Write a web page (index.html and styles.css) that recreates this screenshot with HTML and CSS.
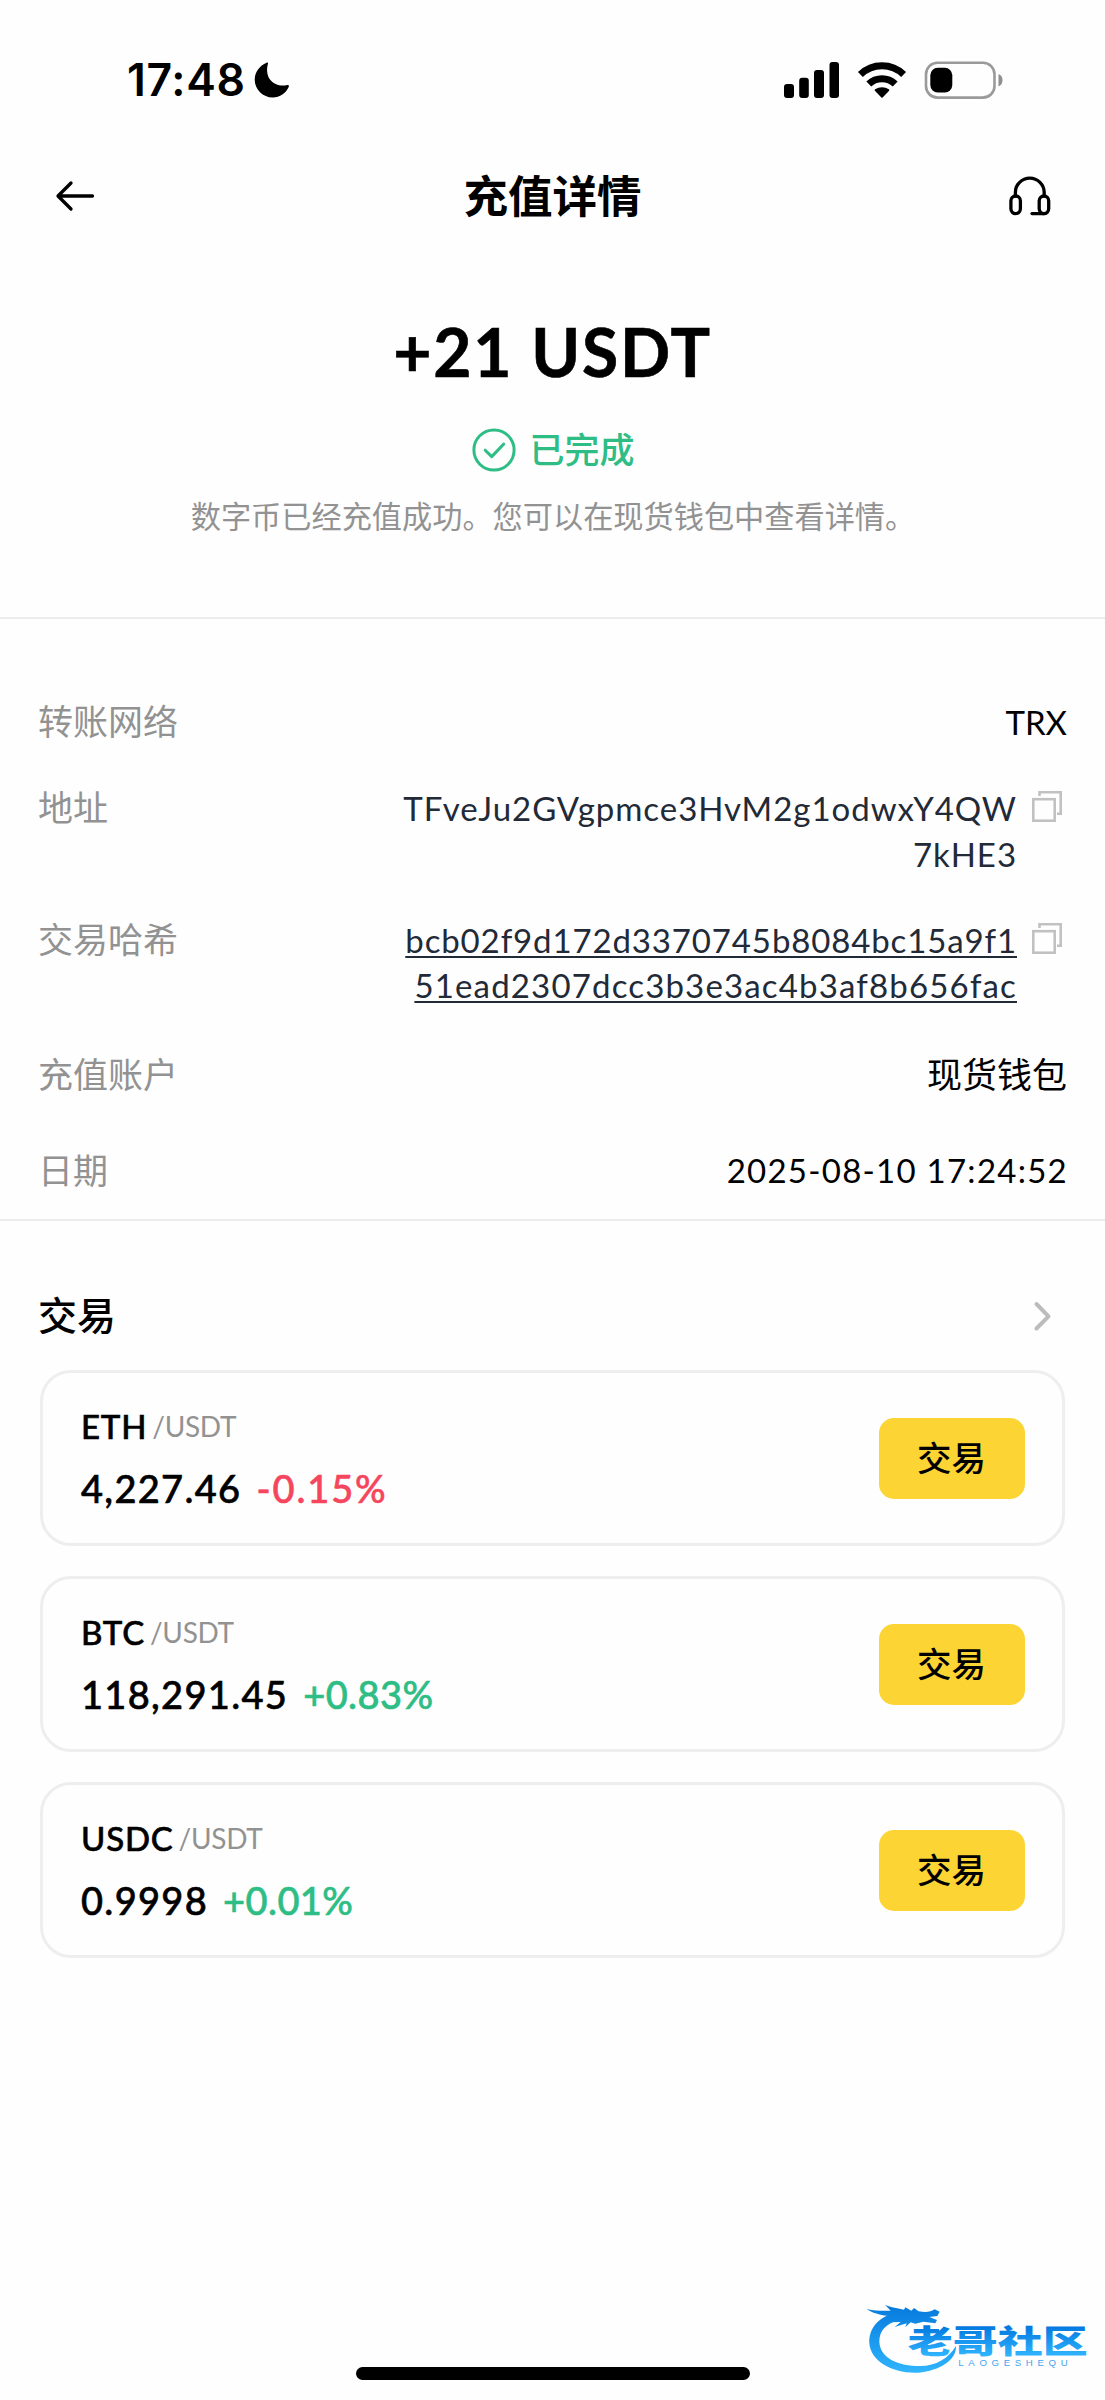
FILE: index.html
```html
<!DOCTYPE html>
<html lang="zh-CN">
<head>
<meta charset="utf-8">
<title>充值详情</title>
<link rel="stylesheet" href="styles.css">
</head>
<body>
<div class="screen">
  <div class="statusbar">
    <span class="clock">17:48</span>
    <svg class="moon" width="36" height="36" viewBox="0 0 36 36"><path d="M12.6 .8C13.6 .2 14.3 .9 13.9 2C12.6 6.5 12.6 13 16.2 17.8C20 22.900 27.500 24.700 33.200 23C34.600 22.600 35.300 23.500 34.800 24.700C32 31.300 25.800 35.500 18.800 35.500C8.800 35.500 .7 27.500 .7 17.500C.7 10.200 5.600 3.800 12.600 .8Z"/></svg>
    <div class="indicators">
      <svg width="56" height="36" viewBox="0 0 56 36"><rect x="0" y="22" width="10" height="14" rx="3"/><rect x="15.200" y="15.700" width="9.600" height="20.300" rx="3"/><rect x="30" y="8" width="10" height="28" rx="3"/><rect x="45.500" y="0" width="9.500" height="36" rx="3"/></svg>
      <svg class="wifi" width="50" height="38" viewBox="0 0 50 38"><g fill="none" stroke="#000" stroke-width="7"><path d="M3.400 13.600A31 31 0 0 1 46.600 13.600"/><path d="M11.800 23A19 19 0 0 1 38.200 23"/></g><path d="M18.100 30C17.500 29.400 17.600 28.700 18.200 28.300C22.200 25.400 27.800 25.400 31.800 28.300C32.400 28.700 32.500 29.400 31.900 30L25.600 36.500Q25 37.100 24.400 36.500Z"/></svg>
      <svg class="battery" width="80" height="38" viewBox="0 0 80 38"><rect x="2" y="1.800" width="68.500" height="34.800" rx="11.500" fill="none" stroke="#9a9a9a" stroke-width="2.600"/><rect x="6.300" y="6.700" width="22" height="24.800" rx="7.500"/><path d="M74.500 13C77 13.800 78.500 16.200 78.500 19.200S77 24.600 74.500 25.400Z" fill="#8e8e8e"/></svg>
    </div>
  </div>

  <header class="navbar">
    <svg width="44" height="36" viewBox="0 0 44 36" class="line-icon"><path d="M38.500 18H4.500M17 5L4 18L17 31"/></svg>
    <h1 class="title">充值详情</h1>
    <svg width="44" height="40" viewBox="0 0 44 40" class="line-icon"><path d="M8.400 20V16.500A14.400 14.400 0 0 1 37.200 16.500V20"/><rect x="3.900" y="20" width="9.500" height="17.600" rx="4.750"/><rect x="32.200" y="20" width="9.500" height="17.600" rx="4.750"/><path d="M25 37.600H37"/></svg>
  </header>

  <section class="hero">
    <div class="amount">+21 USDT</div>
    <div class="state">
      <svg width="44" height="44" viewBox="0 0 44 44"><circle cx="22" cy="22" r="20.100"/><path d="M13.200 22.200L19.700 28.600L31.800 16"/></svg>
      <span>已完成</span>
    </div>
    <p class="hint">数字币已经充值成功。您可以在现货钱包中查看详情。</p>
  </section>

  <section class="details">
    <div class="row"><span class="label">转账网络</span><span class="value latin">TRX</span></div>
    <div class="row row-long">
      <span class="label">地址</span>
      <div class="value latin code"><span class="addr">TFveJu2GVgpmce3HvM2g1odwxY4QW</span><span class="addr">7kHE3</span></div>
      <svg class="copy" width="30" height="31" viewBox="0 0 30 31"><rect x="1.300" y="8.200" width="21.400" height="21.500"/><path d="M7.500 5V1.300H28.700V22.700H25"/></svg>
    </div>
    <div class="row row-long">
      <span class="label">交易哈希</span>
      <div class="value latin code link"><span class="hash-a">bcb02f9d172d3370745b8084bc15a9f1</span><span class="hash-b">51ead2307dcc3b3e3ac4b3af8b656fac</span></div>
      <svg class="copy" width="30" height="31" viewBox="0 0 30 31"><rect x="1.300" y="8.200" width="21.400" height="21.500"/><path d="M7.500 5V1.300H28.700V22.700H25"/></svg>
    </div>
    <div class="row row-account"><span class="label">充值账户</span><span class="value">现货钱包</span></div>
    <div class="row row-date"><span class="label">日期</span><span class="value date">2025-08-10 17:24:52</span></div>
  </section>

  <section class="trade">
    <div class="trade-head">
      <h2>交易</h2>
      <svg width="20" height="32" viewBox="0 0 20 32"><path d="M3.500 4L15.500 16.300L3.500 28.500"/></svg>
    </div>
    <div class="cards">
      <div class="card">
        <div class="market">
          <div class="pair"><span class="base">ETH</span><span class="quote">/USDT</span></div>
          <div class="quoteline"><span class="price">4,227.46</span><span class="change down">-0.15%</span></div>
        </div>
        <button class="buy">交易</button>
      </div>
      <div class="card">
        <div class="market">
          <div class="pair"><span class="base">BTC</span><span class="quote">/USDT</span></div>
          <div class="quoteline"><span class="price">118,291.45</span><span class="change up">+0.83%</span></div>
        </div>
        <button class="buy">交易</button>
      </div>
      <div class="card">
        <div class="market">
          <div class="pair"><span class="base">USDC</span><span class="quote">/USDT</span></div>
          <div class="quoteline"><span class="price">0.9998</span><span class="change up">+0.01%</span></div>
        </div>
        <button class="buy">交易</button>
      </div>
    </div>
  </section>

  <div class="home-indicator"></div>

  <svg class="watermark" width="265" height="120" viewBox="0 0 795 360">
    <defs>
      <linearGradient id="ring" gradientUnits="userSpaceOnUse" x1="0" y1="75" x2="0" y2="275"><stop offset="0" stop-color="#0579dc"/><stop offset="1" stop-color="#2fb4fd"/></linearGradient>
      <linearGradient id="word" gradientUnits="userSpaceOnUse" x1="0" y1="140" x2="0" y2="230"><stop offset="0" stop-color="#0479e0"/><stop offset="1" stop-color="#31b6ff"/></linearGradient>
    </defs>
    <path fill="url(#ring)" d="M172 96C115 110 86 145 88 190C92 245 160 282 235 278C300 272 350 240 348 198C325 235 290 258 240 258C175 258 120 235 118 185C118 152 138 130 178 120L200 113L178 96Z"/>
    <path fill="url(#ring)" d="M80 87C105 93 130 92 152 92L135 74C152 83 176 84 192 89L196 82L214 92L222 84L236 94C254 97 270 98 284 88L299 95L292 108L268 111L291 120L286 130L250 125L226 131L212 127L196 142L200 130L164 141L182 126L134 127L150 108C120 106 95 98 80 87Z"/>
    <text class="wm-name" x="203" y="220" textLength="540" lengthAdjust="spacingAndGlyphs" fill="url(#word)">老哥社区</text>
    <text class="wm-latin" x="355" y="259" textLength="328" fill="#45a5ee">LAOGESHEQU</text>
  </svg>
</div>
</body>
</html>
```
FILE: styles.css
```css
* { box-sizing: border-box; }
body { margin: 0; background: #fff; }
h1, h2, p { margin: 0; font-weight: inherit; }
svg { display: block; flex: none; }

.screen {
  position: relative;
  display: flex;
  flex-direction: column;
  width: 1105px;
  height: 2400px;
  overflow: hidden;
  background: #fefefe;
  color: #000;
  font-family: Lato, "Noto Sans CJK SC", sans-serif;
}

/* System status bar */
.statusbar {
  display: flex;
  align-items: center;
  height: 160px;
  padding: 0 101px 0 127px;
}
.clock {
  font: 600 44.5px/50px Inter, sans-serif;
  letter-spacing: .68px;
}
.moon { margin-left: 8px; }
.indicators {
  display: flex;
  align-items: center;
  margin-left: auto;
}
.wifi { margin-left: 17px; }
.battery { margin-left: 17px; }

/* Page header */
.navbar {
  display: flex;
  align-items: center;
  justify-content: space-between;
  height: 72px;
  padding: 0 54px 0 54px;
}
.title {
  font-size: 44.5px;
  line-height: 60px;
  font-weight: 700;
}
.line-icon {
  fill: none;
  stroke: #000;
  stroke-width: 3.300;
  stroke-linecap: round;
  stroke-linejoin: round;
}

/* Amount and state */
.hero {
  display: flex;
  flex-direction: column;
  align-items: center;
  height: 387px;
  padding-top: 80px;
  border-bottom: 2px solid #ededed;
}
.amount {
  font-size: 66px;
  line-height: 80px;
  font-weight: 700;
  letter-spacing: 1.8px;
  -webkit-text-stroke: .6px currentColor;
}
.state {
  display: flex;
  align-items: center;
  gap: 13px;
  margin: 36px 0 0 2px;
  color: #2ebd85;
  font-size: 35px;
  line-height: 44px;
  font-weight: 500;
}
.state svg {
  fill: none;
  stroke: currentColor;
  stroke-width: 3;
  stroke-linecap: round;
  stroke-linejoin: round;
}
.state span { margin-top: -2px; }
.hint {
  margin-top: 24px;
  padding-left: 1px;
  color: #929292;
  font-size: 30.2px;
  line-height: 40px;
}

/* Transfer details */
.details {
  padding: 80px 38px 26px;
  border-bottom: 2px solid #ededed;
}
.row {
  display: flex;
  justify-content: space-between;
  font-size: 33px;
  line-height: 45.300px;
}
.latin { margin: 1px 0 -1px; }
.label { color: #929292; font-size: 35px; }
.row-long { margin-top: 41px; }
.row-account { margin-top: 45px; }
.row-account .value { font-size: 35px; }
.row-date { margin-top: 50px; }
.date { letter-spacing: 1.260px; margin-right: -1px; }
.code {
  display: flex;
  flex-direction: column;
  align-items: flex-end;
  margin-left: auto;
  color: #222a37;
}
.addr { letter-spacing: .96px; }
.hash-a { letter-spacing: .87px; }
.hash-b { letter-spacing: 1.160px; }
.link span {
  text-decoration: underline;
  text-decoration-thickness: 2px;
  text-underline-offset: 3px;
}
.copy {
  margin: 6px 5px 0 15px;
  fill: none;
  stroke: #c1c1c1;
  stroke-width: 2.600;
}

/* Market list */
.trade { padding: 65px 40px 0; }
.trade-head {
  display: flex;
  align-items: center;
  justify-content: space-between;
  height: 60px;
  padding-right: 12px;
}
.trade-head h2 {
  margin: -2px 0 0 -2px;
  font-size: 39px;
  line-height: 60px;
  font-weight: 500;
}
.trade-head svg {
  fill: none;
  stroke: #bcbcbc;
  stroke-width: 4;
  stroke-linecap: round;
  stroke-linejoin: round;
}
.cards {
  display: flex;
  flex-direction: column;
  gap: 30px;
  margin-top: 24px;
}
.card {
  display: flex;
  align-items: center;
  justify-content: space-between;
  height: 176px;
  padding: 0 37px 0 38px;
  border: 3px solid #eee;
  border-radius: 31px;
}
.market { display: flex; flex-direction: column; gap: 17px; padding-top: 2px; }
.pair, .quoteline { display: flex; align-items: center; }
.pair { line-height: 40px; gap: 5px; }
.base { font-size: 33px; font-weight: 500; letter-spacing: .8px; }
.quote { color: #929292; font-size: 28px; letter-spacing: -.3px; }
.quoteline { line-height: 50px; gap: 15px; font-size: 38px; font-weight: 500; }
.price { letter-spacing: 1.320px; }
.base, .price, .change { -webkit-text-stroke: .6px currentColor; }
.down { color: #f6465d; letter-spacing: 1.880px; }
.up { color: #2ebd85; letter-spacing: .42px; }
.buy {
  width: 146px;
  height: 81px;
  padding: 0 1px 2px 0;
  border: 0;
  border-radius: 15px;
  background: #fcd434;
  color: #000;
  font: 500 34.500px/79px Lato, "Noto Sans CJK SC", sans-serif;
}

.home-indicator {
  width: 394px;
  height: 13px;
  margin: auto auto 20px 356px;
  border-radius: 7px;
  background: #000;
}

/* Community mark laid over the bottom corner */
.watermark {
  position: absolute;
  left: 840px;
  top: 2280px;
}
.wm-name { font: 900 96px "Noto Sans CJK SC", sans-serif; }
.wm-latin { font: 400 29px "Liberation Sans", sans-serif; }
```
